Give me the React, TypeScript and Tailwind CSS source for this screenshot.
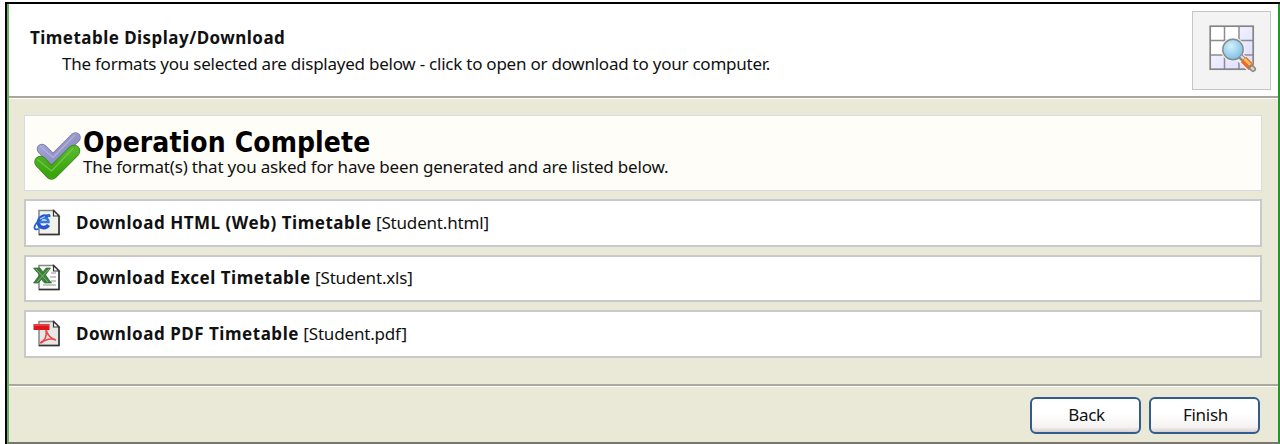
import type { ReactNode } from 'react';

function TimetableIcon() {
  return (
    <svg className="relative left-[2px] -top-px" width="50" height="50" viewBox="0 0 50 50">
      <defs>
        <linearGradient id="cell" x1="0" y1="0" x2="1" y2="1">
          <stop offset="0" stopColor="#ffffff" />
          <stop offset="1" stopColor="#d9d9ff" />
        </linearGradient>
        <radialGradient id="lens" cx="0.4" cy="0.35" r="0.7">
          <stop offset="0" stopColor="#d3f1fc" />
          <stop offset="1" stopColor="#79bce2" />
        </radialGradient>
      </defs>
      <rect x="1.2" y="1.2" width="43" height="43" fill="#fff" />
      <path d="M30 1h14v14H30zM30 15h14v15H30zM30 30h14v14H30zM15 30h15v14H15zM1 30h14v14H1z" fill="url(#cell)" />
      <path d="M15.5 1v43M30 1v43M1 15.5h43M1 30h43" stroke="#8d8d8d" strokeWidth="1.5" />
      <rect x="1.2" y="1.2" width="43" height="43" fill="none" stroke="#858585" strokeWidth="1.7" />
      <circle cx="24" cy="24.5" r="12" fill="#f3f3f3" />
      <path d="M31 32l12 12" stroke="#f3f3f3" strokeWidth="9" />
      <circle cx="24" cy="24.5" r="10.2" fill="url(#lens)" stroke="#858b90" strokeWidth="1.4" />
      <path d="M31 31l5 5" stroke="#8a8a8a" strokeWidth="5.5" />
      <path d="M32 31l3 3" stroke="#dddddd" strokeWidth="2.2" />
      <path d="M34.5 34.5l8 8" stroke="#ed672a" strokeWidth="7.5" />
      <path d="M35.5 34l8 8" stroke="#ffbd55" strokeWidth="2.8" />
      <path d="M42.5 42.5l1.5 1.5" stroke="#8c8780" strokeWidth="6" strokeLinecap="round" />
      <path d="M43 43l1 1" stroke="#d9d2c8" strokeWidth="3" strokeLinecap="round" />
    </svg>
  );
}

function CheckIcon() {
  return (
    <svg className="mr-px mt-[8px] shrink-0" width="48" height="52" viewBox="0 0 48 52" fill="none" strokeLinejoin="round" strokeLinecap="round">
      <defs>
        <linearGradient id="violet" x1="0" y1="0" x2="1" y2="1">
          <stop offset="0" stopColor="#a9a9d8" />
          <stop offset="1" stopColor="#8484bd" />
        </linearGradient>
        <linearGradient id="green" x1="0" y1="0" x2="0" y2="1">
          <stop offset="0" stopColor="#55b72a" />
          <stop offset="1" stopColor="#3ba50d" />
        </linearGradient>
      </defs>
      <path d="M8 18l11 11L41.5 6.5" stroke="#74749c" strokeWidth="10.5" />
      <path d="M8 18l11 11L41.5 6.5" stroke="url(#violet)" strokeWidth="9" />
      <path d="M6.5 15.5l12.5 11L40.5 4.5" stroke="#b0b0dc" strokeWidth="1.2" />
      <path d="M6.5 31l11 11.500L40 20" stroke="#39831c" strokeWidth="12.5" />
      <path d="M6.5 31l11 11.500L40 20" stroke="url(#green)" strokeWidth="11" />
      <path d="M4 29l13.500 11L39 17.5" stroke="#70c748" strokeWidth="1.2" />
    </svg>
  );
}

function Page({ children, fill = '#fff' }: { children: ReactNode; fill?: string }) {
  return (
    <svg className="shrink-0" width="28" height="28" viewBox="0 0 28 28">
      <path d="M6 1.5h15l5 5V25.5H6z" fill={fill} stroke="#858585" strokeWidth="1.5" />
      <path d="M26 7v18.5H6" fill="none" stroke="#333" strokeWidth="1.5" />
      <path d="M20.5 1.5v5.5H26z" fill="#fff" stroke="#333" strokeWidth="1.2" />
      {children}
    </svg>
  );
}

function HtmlIcon() {
  return (
    <Page fill="#f1f2ec">
      <path d="M15 8.5C11 5 5.5 9 5.5 13.5c0 6 7.5 6.5 10 2.5" fill="none" stroke="#2558d0" strokeWidth="3.6" />
      <path d="M6 13h9.5c0-4.500-7-5.500-9-1" fill="none" stroke="#3976e0" strokeWidth="2.5" />
      <path d="M5.5 20c-6 2-5-4 1-8.500C10 8 18 3 16.5 8" fill="none" stroke="#2260d2" strokeWidth="1.8" />
      <path d="M7 10l5-2.500M9 11h3" stroke="#9ed7fb" strokeWidth="1.3" />
    </Page>
  );
}

function ExcelIcon() {
  return (
    <Page>
      <path d="M18 9h5M17 13h6M18 17h5M10 21h13" stroke="#b7b7b7" strokeWidth="1.5" />
      <path d="M.5 4h6.500l3 4 3-4h4.500l-5 7 6 8h-7l-3-3.500L5 19H.5l6-8z" fill="#398238" stroke="#286a2b" strokeWidth=".7" />
      <path d="M3 5l12 13M16 5L4 18" stroke="#86b77d" strokeWidth=".9" />
    </Page>
  );
}

function PdfIcon() {
  return (
    <Page fill="#e7e7e7">
      <path d="M7 23c6-3 7-8 6-13 2 6 5 9 10 10-5-2-11 0-15 3" fill="none" stroke="#f04444" strokeWidth="1.6" />
      <path d="M.5 4h16v6H.5z" fill="#dc171c" />
      <path d="M1 5h15" stroke="#f36767" />
    </Page>
  );
}

const downloads = [
  { icon: <HtmlIcon />, label: 'Download HTML (Web) Timetable', file: '[Student.html]' },
  { icon: <ExcelIcon />, label: 'Download Excel Timetable', file: '[Student.xls]' },
  { icon: <PdfIcon />, label: 'Download PDF Timetable', file: '[Student.pdf]' },
];

function WizardButton({ children }: { children: ReactNode }) {
  return (
    <button className="h-[37px] w-[111px] rounded-[6px] border-2 border-[#315c8d] bg-linear-to-b from-white from-45% via-[#f5f2f1] via-85% to-[#d5d0cf] pb-[2px] pl-[2px] text-[17px] tracking-[-0.3px]">
      {children}
    </button>
  );
}

export default function App() {
  return (
    <div className="h-[444px] w-[1280px] overflow-hidden bg-white pl-[5px] pt-[2px] font-['Noto_Sans','Open_Sans',sans-serif] text-[17px] leading-[22px] text-[#111]">
      <div className="flex h-[442px] border-l-2 border-t-2 border-black">
        <div className="flex w-full flex-col border-b-2 border-l-2 border-r-2 border-b-[#77776f] border-l-[#65b55a] border-r-[#21972a] bg-[#eae9d8]">
          <header className="flex h-[94px] shrink-0 justify-between border-b-2 border-[#aaa69d] bg-white pl-[21px] pr-[7px] pt-[7px]">
            <div className="pt-[15px]">
              <h1 className="font-bold leading-[24px] tracking-[0.46px]">Timetable Display/Download</h1>
              <p className="pl-[32px] leading-[28px] tracking-[-0.24px]">The formats you selected are displayed below - click to open or download to your computer.</p>
            </div>
            <div className="flex h-[79px] w-[79px] items-center justify-center border border-[#c5c5c5] bg-[#f3f3f3]">
              <TimetableIcon />
            </div>
          </header>

          <main className="flex h-[286px] shrink-0 flex-col gap-[8px] border-t border-white pl-[15px] pr-[16px] pt-[16px]">
            <section className="flex h-[76px] shrink-0 items-center border border-[#d4dce5] bg-[#fffdf8] pl-[9px]">
              <CheckIcon />
              <div className="pb-[1px]">
                <h2 className="font-['DejaVu_Sans_Condensed','DejaVu_Sans',sans-serif] text-[28px] font-bold leading-[28px] tracking-[0.1px] text-black">Operation Complete</h2>
                <p className="leading-[20px] tracking-[-0.19px]">The format(s) that you asked for have been generated and are listed below.</p>
              </div>
            </section>
            {downloads.map((item) => (
              <a key={item.label} className="flex h-[47.6px] shrink-0 items-center border-2 border-[#c9c9c9] bg-white pl-[7px]">
                {item.icon}
                <span className="ml-[15px]">
                  <b className="tracking-[0.53px]">{item.label}</b>{' '}
                  <span className="tracking-[-0.18px]">{item.file}</span>
                </span>
              </a>
            ))}
          </main>

          <footer className="flex grow justify-end gap-[8px] border-t-2 border-[#aaa99d] pr-[18px] pt-[11px] shadow-[inset_0_1px_white]">
            <WizardButton>Back</WizardButton>
            <WizardButton>Finish</WizardButton>
          </footer>
        </div>
      </div>
    </div>
  );
}
